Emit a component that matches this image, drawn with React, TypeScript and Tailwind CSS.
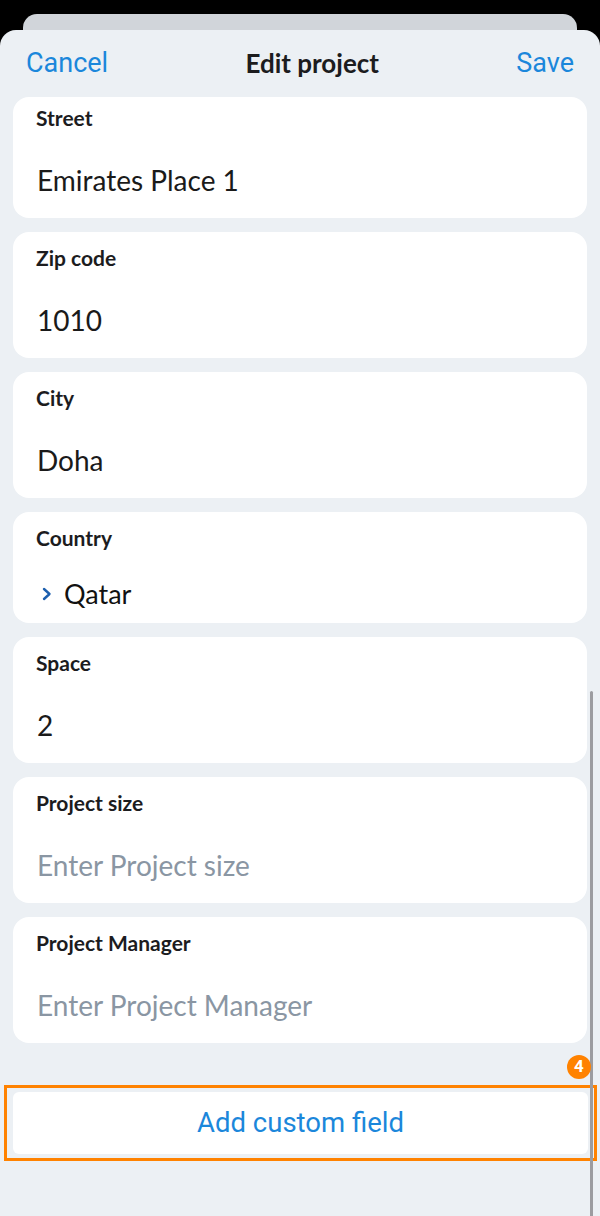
import React from 'react';

interface Field {
  label: string;
  value?: string;
  placeholder?: string;
  select?: boolean;
}

const fields: Field[] = [
  { label: 'Street', value: 'Emirates Place 1' },
  { label: 'Zip code', value: '1010' },
  { label: 'City', value: 'Doha' },
  { label: 'Country', value: 'Qatar', select: true },
  { label: 'Space', value: '2' },
  { label: 'Project size', placeholder: 'Enter Project size' },
  { label: 'Project Manager', placeholder: 'Enter Project Manager' },
];

const lato = { fontFamily: 'Lato, "Noto Sans", sans-serif' };
const roboto = { fontFamily: 'Roboto, "Liberation Sans", sans-serif' };

const FieldCard: React.FC<{ field: Field; first?: boolean }> = ({ field, first }) => {
  if (field.select) {
    return (
      <div className="bg-white rounded-[16px] px-[23px] pt-[14px] pb-[13px]">
        <div className="text-[21px] leading-[24px] font-bold text-[#1c1c1e]">{field.label}</div>
        <div className="mt-[28px] flex items-center h-[32px]">
          <svg width="12" height="14" viewBox="0 0 12 14" className="ml-[5px] mr-[11px]">
            <path d="M3 2 L8.5 7 L3 12" fill="none" stroke="#1d5fae" strokeWidth="2.4" strokeLinecap="round" strokeLinejoin="round" />
          </svg>
          <span className="text-[27px] leading-[32px] text-[#111]">{field.value}</span>
        </div>
      </div>
    );
  }
  return (
    <div className={`bg-white rounded-[16px] px-[23px] pb-[22px] ${first ? 'pt-[9px]' : 'pt-[14px]'}`}>
      <div className="text-[21px] leading-[24px] font-bold text-[#1c1c1e]">{field.label}</div>
      <div
        className={`mt-[34px] pl-[1px] text-[28px] leading-[32px] ${field.value ? 'text-[#1a1a1a]' : 'text-[#8a96a3]'}`}
      >
        {field.value ?? field.placeholder}
      </div>
    </div>
  );
};

export default function App() {
  return (
    <div className="relative h-[1216px] w-[600px] bg-black overflow-hidden flex flex-col" style={lato}>
      <div className="mx-[23px] mt-[14px] h-[40px] rounded-t-[14px] bg-[#d1d5da]" />
      <div className="-mt-[24px] flex-1 rounded-t-[16px] bg-[#ecf0f4] flex flex-col">
        <div className="h-[67px] px-[26px] flex items-center justify-between">
          <span className="text-[27px] text-[#1b87db]" style={roboto}>Cancel</span>
          <span className="text-[26px] font-bold text-[#1c1c1e]">Edit project</span>
          <span className="text-[27px] text-[#1b87db]" style={roboto}>Save</span>
        </div>

        <div className="px-[13px] flex flex-col gap-[14px]">
          {fields.map((f, i) => (
            <FieldCard key={f.label} field={f} first={i === 0} />
          ))}
        </div>

        <div className="mt-[42px] ml-[4px] w-[593px] border-[3px] border-[#ff8200] px-[6px] py-[4px]">
          <div className="h-[62px] bg-white rounded-[6px] flex items-center justify-center">
            <span className="text-[27.5px] text-[#1b87db]" style={roboto}>Add custom field</span>
          </div>
        </div>
      </div>

      {/* scroll indicator */}
      <div className="absolute left-[590px] top-[691px] w-[3px] h-[540px] rounded-full bg-[#9c9ca0]" />

      {/* annotation badge */}
      <div
        className="absolute left-[567px] top-[1055px] w-[24px] h-[24px] rounded-full bg-[#ff8200] flex items-center justify-center text-white text-[17px] font-bold"
        style={roboto}
      >
        4
      </div>
    </div>
  );
}
